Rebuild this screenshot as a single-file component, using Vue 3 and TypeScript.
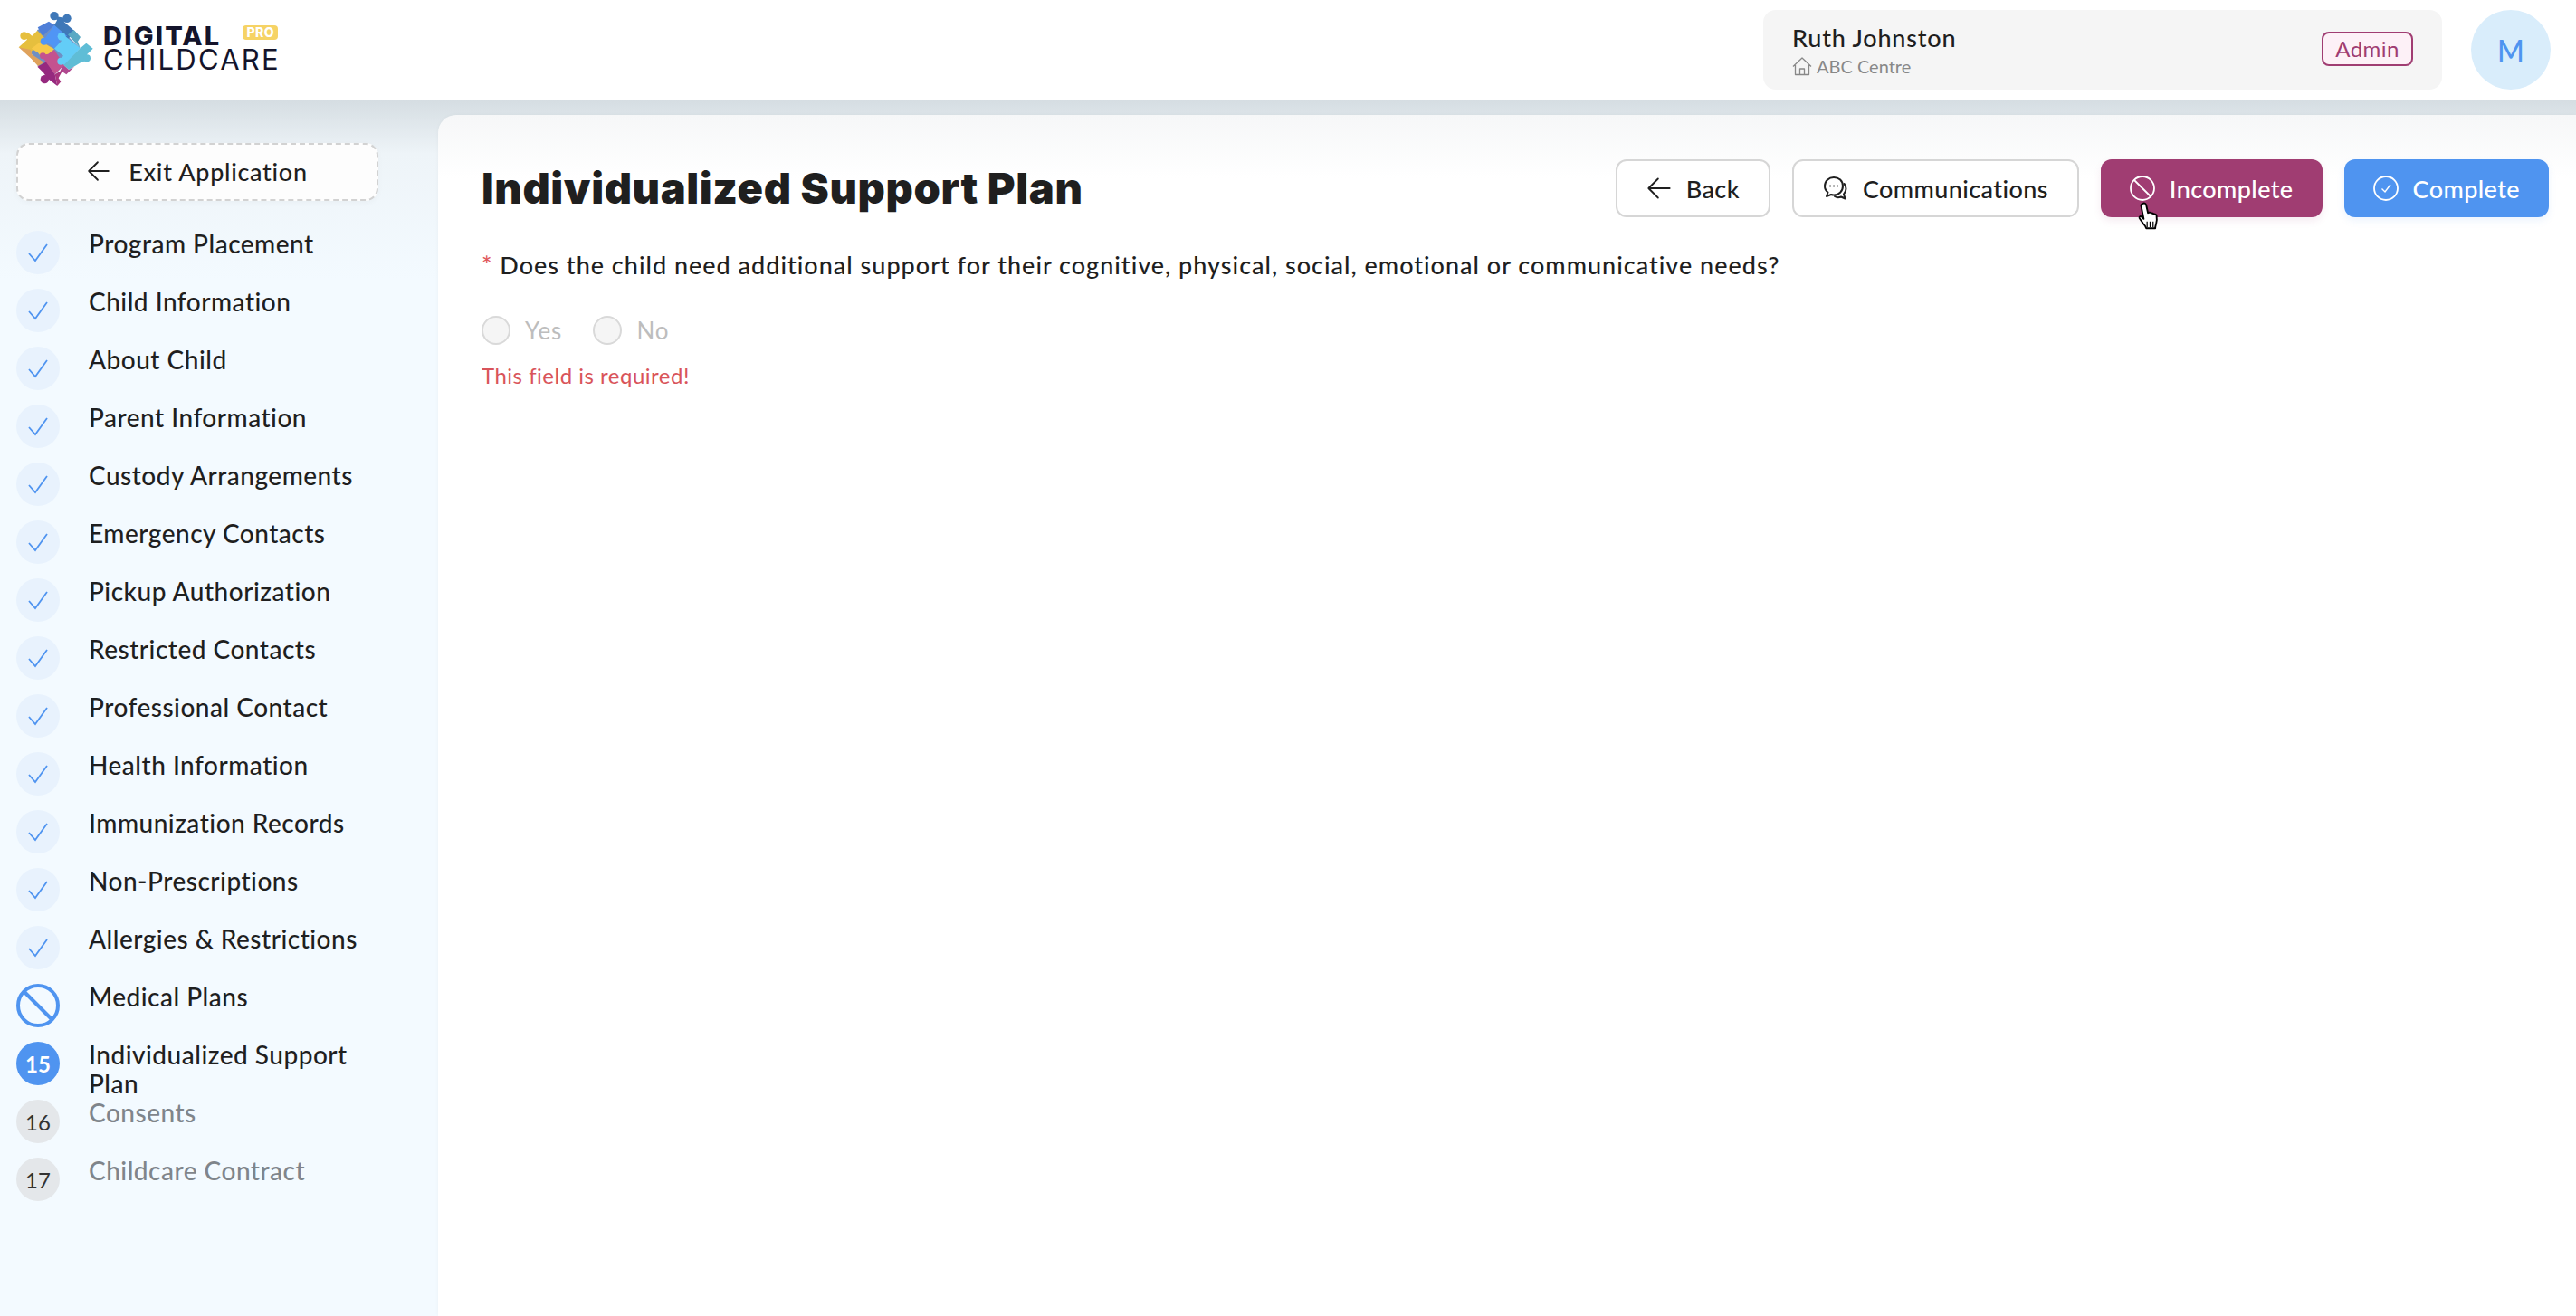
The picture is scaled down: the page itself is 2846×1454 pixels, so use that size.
<script setup lang="ts">
type StepState = 'done' | 'blocked' | 'current' | 'todo'

interface Step {
  label: string
  state: StepState
}

const doneLabels = [
  'Program Placement',
  'Child Information',
  'About Child',
  'Parent Information',
  'Custody Arrangements',
  'Emergency Contacts',
  'Pickup Authorization',
  'Restricted Contacts',
  'Professional Contact',
  'Health Information',
  'Immunization Records',
  'Non-Prescriptions',
  'Allergies & Restrictions',
]

const steps: Step[] = [
  ...doneLabels.map((label) => ({ label, state: 'done' as StepState })),
  { label: 'Medical Plans', state: 'blocked' },
  { label: 'Individualized Support Plan', state: 'current' },
  { label: 'Consents', state: 'todo' },
  { label: 'Childcare Contract', state: 'todo' },
]
</script>

<template>
  <div class="page">
    <header class="topbar">
      <div class="logo">
        <svg class="logo-mark" viewBox="0 0 300 300" width="100" height="100">
          <!-- back pieces -->
          <polygon points="94,84 150,62 236,145 152,232 96,204 72,158" fill="#6f8fc4" />
          <g fill="#3f78b8">
            <polygon points="150,68 165,42 222,92 192,116" />
            <circle cx="150" cy="38" r="14" />
            <circle cx="192" cy="46" r="14" />
            <polygon points="150,38 192,46 170,70" />
          </g>
          <polygon points="95,76 132,56 150,68 112,104" fill="#4f7fd8" />
          <polygon points="195,100 215,84 237,108 228,122 236,145" fill="#5aa9c4" />
          <g fill="#5fbdd6">
            <polygon points="236,145 256,128 278,146 258,166 264,186 242,190 198,216 180,200" />
            <circle cx="258" cy="178" r="12" />
          </g>
          <polygon points="180,200 198,216 216,206 190,232 170,218" fill="#b0488f" />
          <g fill="#e6bf3e">
            <polygon points="32,142 60,116 48,104 62,92 76,104 94,86 118,112 70,160" />
            <circle cx="50" cy="104" r="13" />
          </g>
          <g fill="#dfa25c">
            <polygon points="32,142 72,150 76,166 116,192 96,204 74,180" />
          </g>
          <g fill="#96297f">
            <polygon points="94,206 124,190 152,232 160,270 126,244 114,226" />
            <polygon points="152,232 180,214 164,244 172,256 160,270" fill="#a8357f" />
            <circle cx="118" cy="248" r="14" />
          </g>
          <!-- front pieces -->
          <g fill="#f7c948">
            <polygon points="74,146 106,122 150,148 112,180 96,160" />
          </g>
          <g fill="#c4528f">
            <polygon points="104,168 130,164 150,150 182,200 152,232 122,190" />
            <circle cx="112" cy="170" r="10" />
          </g>
          <g fill="#5095f5">
            <polygon points="150,68 192,104 166,120 170,136 150,142 130,130 104,124 122,108" />
            <circle cx="116" cy="122" r="12" />
            <circle cx="158" cy="136" r="13" />
          </g>
          <g fill="#63cdf7">
            <polygon points="172,94 236,145 182,200 166,186 180,170 150,146 176,118" />
            <circle cx="174" cy="106" r="13" />
            <circle cx="172" cy="188" r="12" />
          </g>
        </svg>
        <div class="logo-text">
          <div class="logo-line1">
            <span>DIGITAL</span>
            <span class="pro">PRO</span>
          </div>
          <div class="logo-line2">CHILDCARE</div>
        </div>
      </div>
      <div class="user-area">
        <div class="user-box">
          <div class="user-info">
            <div class="user-name">Ruth Johnston</div>
            <div class="user-centre">
              <svg viewBox="0 0 22 22" width="22" height="22" fill="none" stroke="#888" stroke-width="1.300" stroke-linejoin="round">
                <path d="M1 11.500 11 2l10 9.500M3.500 10v10.500h15V10M8.500 20.500V14h5v6.500" />
              </svg>
              <span>ABC Centre</span>
            </div>
          </div>
          <span class="role">Admin</span>
        </div>
        <div class="avatar">M</div>
      </div>
    </header>

    <div class="body">
      <aside class="sidebar">
        <button class="exit-btn">
          <svg viewBox="0 0 24 24" width="26" height="26" fill="none" stroke="#1f1f1f" stroke-width="1.700" stroke-linecap="round" stroke-linejoin="round">
            <path d="M22 12H2M11 3l-9 9 9 9" />
          </svg>
          <span>Exit Application</span>
        </button>
        <ul class="steps">
          <li v-for="(step, i) in steps" :key="step.label" class="step" :class="step.state">
            <span class="dot">
              <svg v-if="step.state === 'done'" viewBox="0 0 24 24" width="24" height="24" fill="none" stroke="#4f94f0" stroke-width="1.800">
                <path d="M2 13l7 8L22 3" />
              </svg>
              <svg v-else-if="step.state === 'blocked'" viewBox="0 0 48 48" width="48" height="48" fill="none" stroke="#4f94f0" stroke-width="4">
                <circle cx="24" cy="24" r="22" />
                <path d="M8.500 8.500l31 31" />
              </svg>
              <template v-else>{{ i + 1 }}</template>
            </span>
            <span class="step-label">{{ step.label }}</span>
          </li>
        </ul>
      </aside>

      <main class="content">
        <div class="content-head">
          <h1>Individualized Support Plan</h1>
          <div class="actions">
            <button class="btn outline">
              <svg viewBox="0 0 24 24" width="28" height="28" fill="none" stroke="#1f1f1f" stroke-width="1.600" stroke-linecap="round" stroke-linejoin="round">
                <path d="M22 12H2M11 3l-9 9 9 9" />
              </svg>
              <span>Back</span>
            </button>
            <button class="btn outline">
              <svg viewBox="0 0 28 28" width="28" height="28" fill="none" stroke="#1f1f1f" stroke-width="2" stroke-linecap="round" stroke-linejoin="round">
                <path d="M12 2C6.500 2 2 6 2 11.500c0 3 1.300 5.500 3.500 7L4 23l5-2c1 .300 2 .500 3 .500 5.500 0 10-4.200 10-10S17.500 2 12 2z" />
                <path d="M8 11.500h.1M12 11.500h.1M16 11.500h.1" />
                <path d="M23.500 9c2.500 3 3 8-.5 11.500l1.500 5-4.500-2c-2.500 1-5 .8-7-.5" />
              </svg>
              <span>Communications</span>
            </button>
            <button class="btn incomplete">
              <svg viewBox="0 0 28 28" width="28" height="28" fill="none" stroke="#fff" stroke-width="1.800">
                <circle cx="14" cy="14" r="13" />
                <path d="M5 5l18 18" />
              </svg>
              <span>Incomplete</span>
            </button>
            <button class="btn complete">
              <svg viewBox="0 0 28 28" width="28" height="28" fill="none" stroke="#fff" stroke-width="1.800">
                <circle cx="14" cy="14" r="13" />
                <path d="M9.500 14.500l3.500 3.500 6-8" stroke-width="1.400" />
              </svg>
              <span>Complete</span>
            </button>
          </div>
        </div>

        <p class="question"><span class="star">*</span> Does the child need additional support for their cognitive, physical, social, emotional or communicative needs?</p>
        <div class="radios">
          <label class="radio"><span class="ring"></span>Yes</label>
          <label class="radio"><span class="ring"></span>No</label>
        </div>
        <div class="error">This field is required!</div>

        <!-- mouse pointer sitting over the button -->
        <svg class="cursor" viewBox="0 0 30 36" width="30" height="34">
          <path d="M7 3c2-1 3.500 0 4 2l2 9 1.500-.5c1-.3 2 .2 2.500 1 1-.5 2.300 0 2.500 1 1-.5 3 0 3.500 1.500.5 3 .5 7-.5 10-.5 2-1 3-1 5H11c-.5-2-2-4-4-6-1.500-2.500-3-4-4-6-.5-1.500 1-2.500 2.500-1.500L8 21 5 6c-.3-1.500.8-2.500 2-3z" fill="#fff" stroke="#000" stroke-width="2" stroke-linejoin="round" />
          <path d="M12 24v7M15.500 24v7M19 24v7" stroke="#000" stroke-width="1.300" />
        </svg>
      </main>
    </div>
  </div>
</template>

<style>
html,
body {
  margin: 0;
  background: #fff;
}
</style>

<style scoped>
* {
  box-sizing: border-box;
}

.page {
  width: 2846px;
  height: 1454px;
  display: flex;
  flex-direction: column;
  overflow: hidden;
  font-family: Lato, 'Liberation Sans', sans-serif;
  color: #1f1f1f;
}

.topbar {
  height: 110px;
  flex: none;
  display: flex;
  align-items: center;
  justify-content: space-between;
  padding: 0 28px 0 10px;
  background: #fff;
  position: relative;
  z-index: 2;
}

.logo {
  display: flex;
  align-items: center;
  gap: 4px;
}

.logo-text {
  font-family: Inter, sans-serif;
  color: #14142b;
  margin-bottom: 4px;
}

.logo-line1 {
  height: 26px;
  line-height: 26px;
  font-size: 29px;
  font-weight: 800;
  letter-spacing: 2.2px;
  display: flex;
  align-items: center;
  gap: 24px;
}

.pro {
  background: #f6d365;
  color: #fff;
  font-size: 14px;
  font-weight: 800;
  letter-spacing: 0.5px;
  line-height: 16px;
  padding: 0 4px;
  border-radius: 4px;
  margin-top: -8px;
}

.logo-line2 {
  height: 26px;
  line-height: 26px;
  font-size: 31px;
  font-weight: 400;
  letter-spacing: 2.2px;
}

.user-area {
  display: flex;
  align-items: center;
  gap: 32px;
}

.user-box {
  width: 750px;
  height: 88px;
  background: #f5f5f5;
  border-radius: 14px;
  display: flex;
  align-items: center;
  justify-content: space-between;
  padding: 0 32px;
}

.user-name {
  font-size: 27px;
  font-weight: 500;
  letter-spacing: 0.8px;
  line-height: 34px;
}

.user-centre {
  display: flex;
  align-items: center;
  gap: 5px;
  font-size: 20px;
  line-height: 26px;
  color: #888;
  margin-top: 1px;
}

.role {
  font-size: 24px;
  letter-spacing: 0.5px;
  line-height: 34px;
  padding: 0 13px;
  margin-top: -2px;
  color: #a03d72;
  background: #fdf1f7;
  border: 2px solid #a03d72;
  border-radius: 8px;
}

.avatar {
  width: 88px;
  height: 88px;
  border-radius: 50%;
  background: #d9edfb;
  color: #4f94f0;
  font-size: 32px;
  font-weight: 500;
  display: flex;
  align-items: center;
  justify-content: center;
}

.body {
  flex: 1;
  display: flex;
  background: linear-gradient(180deg, #d5dde2 0, #eef4f8 60px, #f3faff 200px);
}

.sidebar {
  width: 484px;
  flex: none;
  padding: 48px 0 0 18px;
}

.exit-btn {
  width: 400px;
  height: 64px;
  padding: 0 0 2px;
  background: #fdfdfd;
  border: 2px dashed #d2d2d2;
  border-radius: 14px;
  display: flex;
  align-items: center;
  justify-content: center;
  gap: 20px;
  font: inherit;
  font-size: 27px;
  font-weight: 500;
  letter-spacing: 0.7px;
  color: #1f1f1f;
  box-shadow: 0 2px 6px rgba(0, 0, 0, 0.03);
}

.steps {
  list-style: none;
  margin: 33px 0 0;
  padding: 0;
  display: flex;
  flex-direction: column;
  gap: 16px;
}

.step {
  height: 48px;
  display: flex;
  gap: 32px;
}

.dot {
  width: 48px;
  height: 48px;
  flex: none;
  border-radius: 50%;
  display: flex;
  align-items: center;
  justify-content: center;
  font-size: 24px;
  background: #e8f2fd;
}

.step-label {
  width: 330px;
  margin-top: -2px;
  font-size: 28px;
  font-weight: 500;
  letter-spacing: 0.5px;
  line-height: 32px;
}

.step.blocked .dot {
  background: transparent;
}

.step.current .dot {
  background: #4f94f0;
  color: #fff;
  font-weight: 700;
}

.step.todo .dot {
  background: #e4e7ea;
  color: #333;
}

.step.todo .step-label {
  color: #7f858b;
}

.content {
  flex: 1;
  margin-top: 17px;
  padding: 49px 30px 0 48px;
  background: linear-gradient(180deg, #f6f7f8 0, #fff 70px);
  border-top-left-radius: 20px;
  box-shadow: 0 0 4px rgba(0, 0, 0, 0.04);
  position: relative;
}

.content-head {
  display: flex;
  align-items: center;
  justify-content: space-between;
  height: 64px;
}

h1 {
  margin: 0;
  font-family: Inter, sans-serif;
  font-size: 47px;
  font-weight: 900;
  letter-spacing: 0.6px;
  line-height: 60px;
}

.actions {
  display: flex;
  gap: 24px;
}

.btn {
  height: 64px;
  display: flex;
  align-items: center;
  justify-content: center;
  gap: 16px;
  padding: 0 32px;
  border-radius: 12px;
  font: inherit;
  font-size: 27px;
  font-weight: 500;
  letter-spacing: 0.4px;
  border: none;
}

.btn.outline {
  background: #fff;
  border: 2px solid #d6d6d6;
  color: #1f1f1f;
}

.btn.incomplete {
  background: #a03d72;
  color: #fff;
  box-shadow: 0 4px 8px rgba(160, 61, 114, 0.1);
}

.btn.complete {
  background: #4f94f0;
  color: #fff;
  box-shadow: 0 4px 8px rgba(79, 148, 240, 0.1);
}

.question {
  margin: 35px 0 0;
  font-size: 27px;
  font-weight: 500;
  letter-spacing: 1px;
  line-height: 36px;
}

.star {
  color: #e0575b;
}

.radios {
  display: flex;
  gap: 34px;
  margin-top: 38px;
}

.radio {
  display: flex;
  align-items: center;
  gap: 16px;
  font-size: 26px;
  letter-spacing: 1px;
  color: #bdbdbd;
}

.ring {
  width: 32px;
  height: 32px;
  border-radius: 50%;
  background: #f5f5f5;
  border: 2px solid #d9d9d9;
}

.error {
  margin-top: 18px;
  font-size: 24px;
  letter-spacing: 0.5px;
  line-height: 32px;
  color: #d9545a;
}

.cursor {
  position: absolute;
  left: 1876px;
  top: 95px;
}
</style>
